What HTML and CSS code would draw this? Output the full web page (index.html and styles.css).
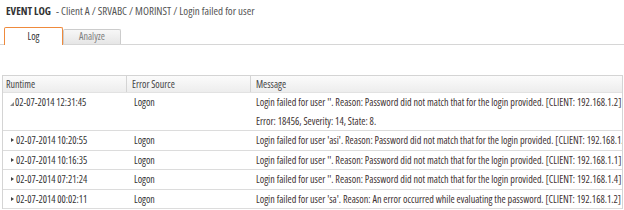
FILE: index.html
```html
<!DOCTYPE html>
<html>
<head>
<meta charset="utf-8">
<link rel="stylesheet" href="styles.css">
</head>
<body>
<div class="page">
  <div class="title"><span class="title-main">EVENT LOG</span><span class="crumb">- Client A / SRVABC / MORINST / Login failed for user</span></div>
  <div class="tabs">
    <div class="tab active">Log</div>
    <div class="tab">Analyze</div>
  </div>
  <div class="grid">
    <div class="row head">
      <div class="cell c1">Runtime</div>
      <div class="cell c2">Error Source</div>
      <div class="cell c3">Message</div>
    </div>
    <div class="row">
      <div class="cell c1"><span class="arrow open"></span>02-07-2014 12:31:45</div>
      <div class="cell c2">Logon</div>
      <div class="cell c3"><div>Login failed for user ''. Reason: Password did not match that for the login provided. [CLIENT: 192.168.1.2]</div><div>Error: 18456, Severity: 14, State: 8.</div></div>
    </div>
    <div class="row">
      <div class="cell c1"><span class="arrow"></span>02-07-2014 10:20:55</div>
      <div class="cell c2">Logon</div>
      <div class="cell c3">Login failed for user 'asi'. Reason: Password did not match that for the login provided. [CLIENT: 192.168.1.3]</div>
    </div>
    <div class="row">
      <div class="cell c1"><span class="arrow"></span>02-07-2014 10:16:35</div>
      <div class="cell c2">Logon</div>
      <div class="cell c3">Login failed for user ''. Reason: Password did not match that for the login provided. [CLIENT: 192.168.1.1]</div>
    </div>
    <div class="row">
      <div class="cell c1"><span class="arrow"></span>02-07-2014 07:21:24</div>
      <div class="cell c2">Logon</div>
      <div class="cell c3">Login failed for user ''. Reason: Password did not match that for the login provided. [CLIENT: 192.168.1.4]</div>
    </div>
    <div class="row">
      <div class="cell c1"><span class="arrow"></span>02-07-2014 00:02:11</div>
      <div class="cell c2">Logon</div>
      <div class="cell c3">Login failed for user 'sa'. Reason: An error occurred while evaluating the password. [CLIENT: 192.168.1.2]</div>
    </div>
  </div>
</div>
</body>
</html>
```
FILE: styles.css
```css
html, body {
  margin: 0;
  padding: 0;
  background: #fff;
}
.page {
  width: 624px;
  height: 210px;
  overflow: hidden;
  font-family: "Open Sans", "Noto Sans", sans-serif;
  font-stretch: 75%;
  font-size: 10px;
  color: #333;
}
.title {
  padding: 2px 0 0 6px;
  height: 18px;
  line-height: 18px;
  white-space: nowrap;
}
.title-main {
  font-size: 10.8px;
  font-weight: 700;
  color: #333;
  margin-right: 5px;
}
.crumb {
  font-size: 11px;
  color: #555;
}
.tabs {
  margin-top: 7px;
  display: flex;
  align-items: flex-end;
  padding-left: 4px;
  border-bottom: 1px solid #d6d6d6;
  height: 17px;
}
.tab {
  box-sizing: border-box;
  width: 58px;
  height: 15px;
  line-height: 13px;
  text-align: center;
  color: #808080;
  border: 1px solid #cccccc;
  border-bottom: none;
  border-radius: 2px 2px 0 0;
  background: linear-gradient(#f7f7f7, #e6e6e6);
}
.tab.active {
  width: 59px;
  height: 18px;
  margin-bottom: -1px;
  line-height: 17px;
  color: #333;
  background: #fff;
  border-color: #ef8a3c;
}
.grid {
  margin: 30px 1px 0 2px;
  border-left: 1px solid #d4d4d4;
  border-right: 1px solid #d4d4d4;
  border-top: 1px solid #d4d4d4;
}
.row {
  display: grid;
  grid-template-columns: 123px 124px 1fr;
  border-bottom: 1px solid #dcdcdc;
  line-height: 18.5px;
}
.cell {
  white-space: nowrap;
  overflow: hidden;
  box-sizing: border-box;
}
.head {
  line-height: 16px;
  background: linear-gradient(#fbfbfb, #ededed);
  border-bottom-color: #e2e2e2;
  color: #444;
}
.head .c1 { padding-left: 3px; }
.head .c2 { padding-left: 5px; border-left: 1px solid #d4d4d4; }
.head .c3 { padding-left: 5px; border-left: 1px solid #d4d4d4; font-size: 10px; }
.c1 { padding-left: 8px; display: flex; align-items: flex-start; }
.c2 { padding-left: 8px; }
.c3 { padding-left: 6px; color: #3e3232; font-size: 10.15px; }
.head .c3 { color: #444; }
.arrow {
  width: 0;
  height: 0;
  margin-top: 7px;
  margin-right: 2px;
  border-top: 2.5px solid transparent;
  border-bottom: 2.5px solid transparent;
  border-left: 3px solid #444;
}
.arrow.open {
  margin-top: 9px;
  margin-left: -1px;
  margin-right: 1px;
  border-top: none;
  border-left: 4px solid transparent;
  border-bottom: 4px solid #888;
  border-right: 0;
}
```
